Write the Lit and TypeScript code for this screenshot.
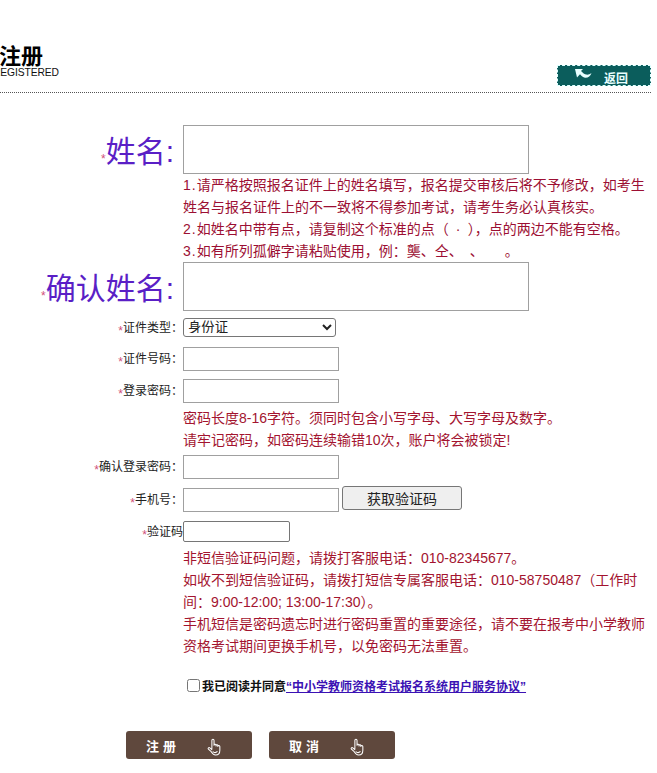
import { LitElement, html, css, svg } from "lit";
import { customElement } from "lit/decorators.js";

const hand = svg`<svg class="hand" viewBox="0 0 16 20" width="15" height="19" fill="none" stroke="#fff" stroke-width="1.100" stroke-linejoin="round" stroke-linecap="round"><path d="M5.200 11V2.400c0-1.600 2.300-1.600 2.300 0v5.200M7.500 7.400c0-1.300 2.100-1.300 2.100 0v1M9.600 8c0-1.200 2-1.200 2 0v1M11.600 8.700c0-1.200 2.100-1.200 2.100.1v4.200c0 2.500-1.500 5-4.500 5-2.800 0-3.800-1.800-5-3.800L1.500 11.800c-.9-1.100.5-2.300 1.500-1.500L5.200 12.300"/><path d="M6.500 14.500c1 1.300 3 1.300 4.300-.1"/></svg>`;

@customElement("app-root")
export class AppRoot extends LitElement {
  static styles = css`
    :host { display: block; width: 651px; background: #fff; font-family: "Liberation Sans", "Noto Sans CJK SC", sans-serif; color: #222; }
    .header { height: 92px; border-bottom: 1px dotted #555; display: flex; justify-content: space-between; align-items: flex-end; }
    .title { margin-left: -7px; margin-bottom: 14px; width: 66px; display: flex; flex-direction: column; }
    .title b { font-size: 22px; line-height: 24px; font-weight: 700; color: #000; padding-left: 6px; white-space: nowrap; font-family: "Noto Sans CJK SC", sans-serif; }
    .title span { font-size: 10.300px; line-height: 10px; margin-top: 2px; color: #111; letter-spacing: -0.100px; }
    .back { width: 94px; height: 21px; margin-bottom: 6px; background: #0b5d5c; border: 1px dashed #dff; box-sizing: border-box; display: flex; align-items: center; color: #e8ffff; font-size: 12px; font-weight: 700; }
    .back svg { margin: -3px 12px 0 17px; }
    .back span { margin-top: 3px; }
    form { display: flex; flex-direction: column; padding-top: 32px; margin: 0; }
    .row { display: grid; grid-template-columns: 183px 1fr; align-items: center; }
    .lab { text-align: right; font-size: 12px; line-height: 18px; color: #222; white-space: nowrap; }
    .lab i { font-style: normal; color: #d0507a; font-size: 12px; line-height: 0; vertical-align: -3px; }
    .big { font-size: 30px; line-height: 40px; color: #5a1fc6; padding-top: 4px; padding-right: 9px; }
    .big i { vertical-align: -1px; }
    .tall { width: 346px; height: 49px; box-sizing: border-box; border: 1px solid #a0a0a0; padding: 0; margin: 0; display: block; background: #fff; }
    .inp { width: 156px; height: 24px; box-sizing: border-box; border: 1px solid #a0a0a0; padding: 0; margin: 0; display: block; background: #fff; }
    .code { width: 107px; height: 21px; box-sizing: border-box; border: 1px solid #767676; border-radius: 2px; padding: 0; margin: 0; display: block; background: #fff; }
    select { width: 153px; height: 19px; box-sizing: border-box; font-family: inherit; font-size: 13.330px; padding: 0 0 3px 0; margin: 0; display: block; color: #222; background: #fff; border: 1px solid #767676; border-radius: 3px; }
    .note { margin-left: 183px; width: 466px; color: #a3142f; font-size: 14px; line-height: 22px; }
    .note.first { color: #9c0f33; }
    .n { letter-spacing: 1px; }
    .dot { display: inline-block; width: 19px; text-align: center; }
    .phone { display: flex; align-items: flex-start; gap: 3px; }
    .sms { width: 120px; height: 24px; margin: -2px 0 0 0; padding: 0; box-sizing: border-box; background: #efefef; border: 1px solid #767676; border-radius: 3px; font-family: inherit; font-size: 14px; color: #222; }
    .agree { margin: 18px 0 0 187px; height: 20px; display: flex; align-items: center; font-size: 12px; font-weight: 700; color: #111; white-space: nowrap; }
    .agree input { width: 13px; height: 13px; margin: 0 2px 0 0; }
    .agree a { color: #3b12b4; text-decoration: underline; }
    .actions { display: flex; gap: 17px; margin: 36px 0 14px 126px; }
    .btn { width: 126px; height: 28px; background: #5f483d; border-radius: 3px; color: #fff; display: flex; align-items: center; font-size: 13px; font-weight: 700; letter-spacing: 4px; padding: 0 0 0 20px; box-sizing: border-box; }
    .hand { margin-left: 27px; margin-top: 4px; }
    .m7 { margin-top: 7px; } .m10 { margin-top: 10px; } .m8 { margin-top: 8px; } .m4 { margin-top: 4px; } .m9 { margin-top: 9px; } .m5 { margin-top: 5px; }
  `;

  render() {
    return html`
      <div class="header">
        <div class="title"><b>注册</b><span>REGISTERED</span></div>
        <div class="back">
          <svg width="17" height="11" viewBox="0 0 17 11"><path d="M0 0h8L6 2c1.500 1.500 3 3 5 3.500 2 .5 3.500-.3 5.500-1.500-1 3-3.500 5-6.500 4.700C8 8.400 6.500 6.800 5 5.200L2 8.500z" fill="#e8ffff"/></svg>
          <span>返回</span>
        </div>
      </div>
      <form>
        <div class="row"><div class="lab big"><i>*</i>姓名:</div><input class="tall" /></div>
        <div class="note first">
          <span class="n">1.</span>请严格按照报名证件上的姓名填写，报名提交审核后将不予修改，如考生姓名与报名证件上的不一致将不得参加考试，请考生务必认真核实。<br />
          <span class="n">2.</span>如姓名中带有点，请复制这个标准的点（<span class="dot">·</span>），点的两边不能有空格。<br />
          <span class="n">3.</span>如有所列孤僻字请粘贴使用，例：龑、仝、　、　　。
        </div>
        <div class="row"><div class="lab big"><i>*</i>确认姓名:</div><input class="tall" /></div>
        <div class="row m7"><div class="lab"><i>*</i>证件类型：</div><select><option>身份证</option></select></div>
        <div class="row m10"><div class="lab"><i>*</i>证件号码：</div><input class="inp" /></div>
        <div class="row m8"><div class="lab"><i>*</i>登录密码：</div><input class="inp" /></div>
        <div class="note m4">密码长度8-16字符。须同时包含小写字母、大写字母及数字。<br />请牢记密码，如密码连续输错10次，账户将会被锁定!</div>
        <div class="row m4"><div class="lab"><i>*</i>确认登录密码：</div><input class="inp" /></div>
        <div class="row m9"><div class="lab"><i>*</i>手机号：</div><div class="phone"><input class="inp" /><button type="button" class="sms">获取验证码</button></div></div>
        <div class="row m9"><div class="lab"><i>*</i>验证码</div><input class="code" /></div>
        <div class="note m5">
          非短信验证码问题，请拨打客服电话：010-82345677。<br />
          如收不到短信验证码，请拨打短信专属客服电话：010-58750487（工作时间：9:00-12:00; 13:00-17:30）。<br />
          手机短信是密码遗忘时进行密码重置的重要途径，请不要在报考中小学教师资格考试期间更换手机号，以免密码无法重置。
        </div>
        <label class="agree"><input type="checkbox" />我已阅读并同意<a>“中小学教师资格考试报名系统用户服务协议”</a></label>
        <div class="actions">
          <div class="btn">注册${hand}</div>
          <div class="btn">取消${hand}</div>
        </div>
      </form>
    `;
  }
}
